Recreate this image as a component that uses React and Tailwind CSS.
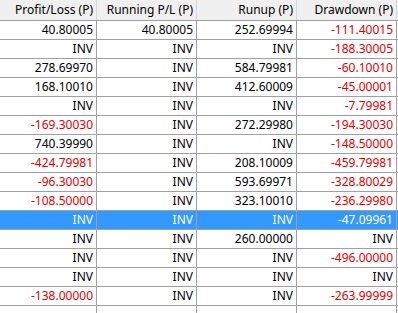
const headers = ['Profit/Loss (P)', 'Running P/L (P)', 'Runup (P)', 'Drawdown (P)']

const rows = [
  ['40.80005', '40.80005', '252.69994', '-111.40015'],
  ['INV', 'INV', 'INV', '-188.30005'],
  ['278.69970', 'INV', '584.79981', '-60.10010'],
  ['168.10010', 'INV', '412.60009', '-45.00001'],
  ['INV', 'INV', 'INV', '-7.79981'],
  ['-169.30030', 'INV', '272.29980', '-194.30030'],
  ['740.39990', 'INV', 'INV', '-148.50000'],
  ['-424.79981', 'INV', '208.10009', '-459.79981'],
  ['-96.30030', 'INV', '593.69971', '-328.80029'],
  ['-108.50000', 'INV', '323.10010', '-236.29980'],
  ['INV', 'INV', 'INV', '-47.09961'],
  ['INV', 'INV', '260.00000', 'INV'],
  ['INV', 'INV', 'INV', '-496.00000'],
  ['INV', 'INV', 'INV', 'INV'],
  ['-138.00000', 'INV', 'INV', '-263.99999'],
  ['', '', '', ''],
]

const widths = ['w-[97px]', 'w-[100px]', 'w-[100px]', 'w-[100px]']

function Cell({ value, width, selected }) {
  const negative = value.startsWith('-')
  const color = selected ? 'text-white' : negative ? 'text-[#e00000]' : 'text-black'
  return (
    <div className={`${width} h-full shrink-0 border-r border-[#a0a0a0] pr-[3px] text-right leading-[18px] ${color}`}>
      {value}
    </div>
  )
}

export default function App() {
  return (
    <div className="h-[313px] w-[398px] overflow-hidden bg-white font-['Noto_Sans','Liberation_Sans',sans-serif] text-[12px]">
      <div className="flex h-[21px] border-b border-[#a0a0a0] bg-[#f0f0f0]">
        {headers.map((h, i) => (
          <div key={h} className={`${widths[i]} shrink-0 border-r border-[#d5d5d5] pr-[3px] text-right leading-[20px] text-black`}>
            {h}
          </div>
        ))}
        <div className="flex flex-1 items-center pl-[1px]">
          <div className="h-[11px] w-[1px] bg-[#7a3b00]" />
        </div>
      </div>
      {rows.map((r, ri) => {
        const selected = ri === 10
        return (
          <div key={ri} className={`flex h-[19px] border-b border-[#a0a0a0] ${selected ? 'bg-[#3399ff]' : 'bg-white'}`}>
            {r.map((v, ci) => (
              <Cell key={ci} value={v} width={widths[ci]} selected={selected} />
            ))}
            <div className="flex-1" />
          </div>
        )
      })}
    </div>
  )
}
